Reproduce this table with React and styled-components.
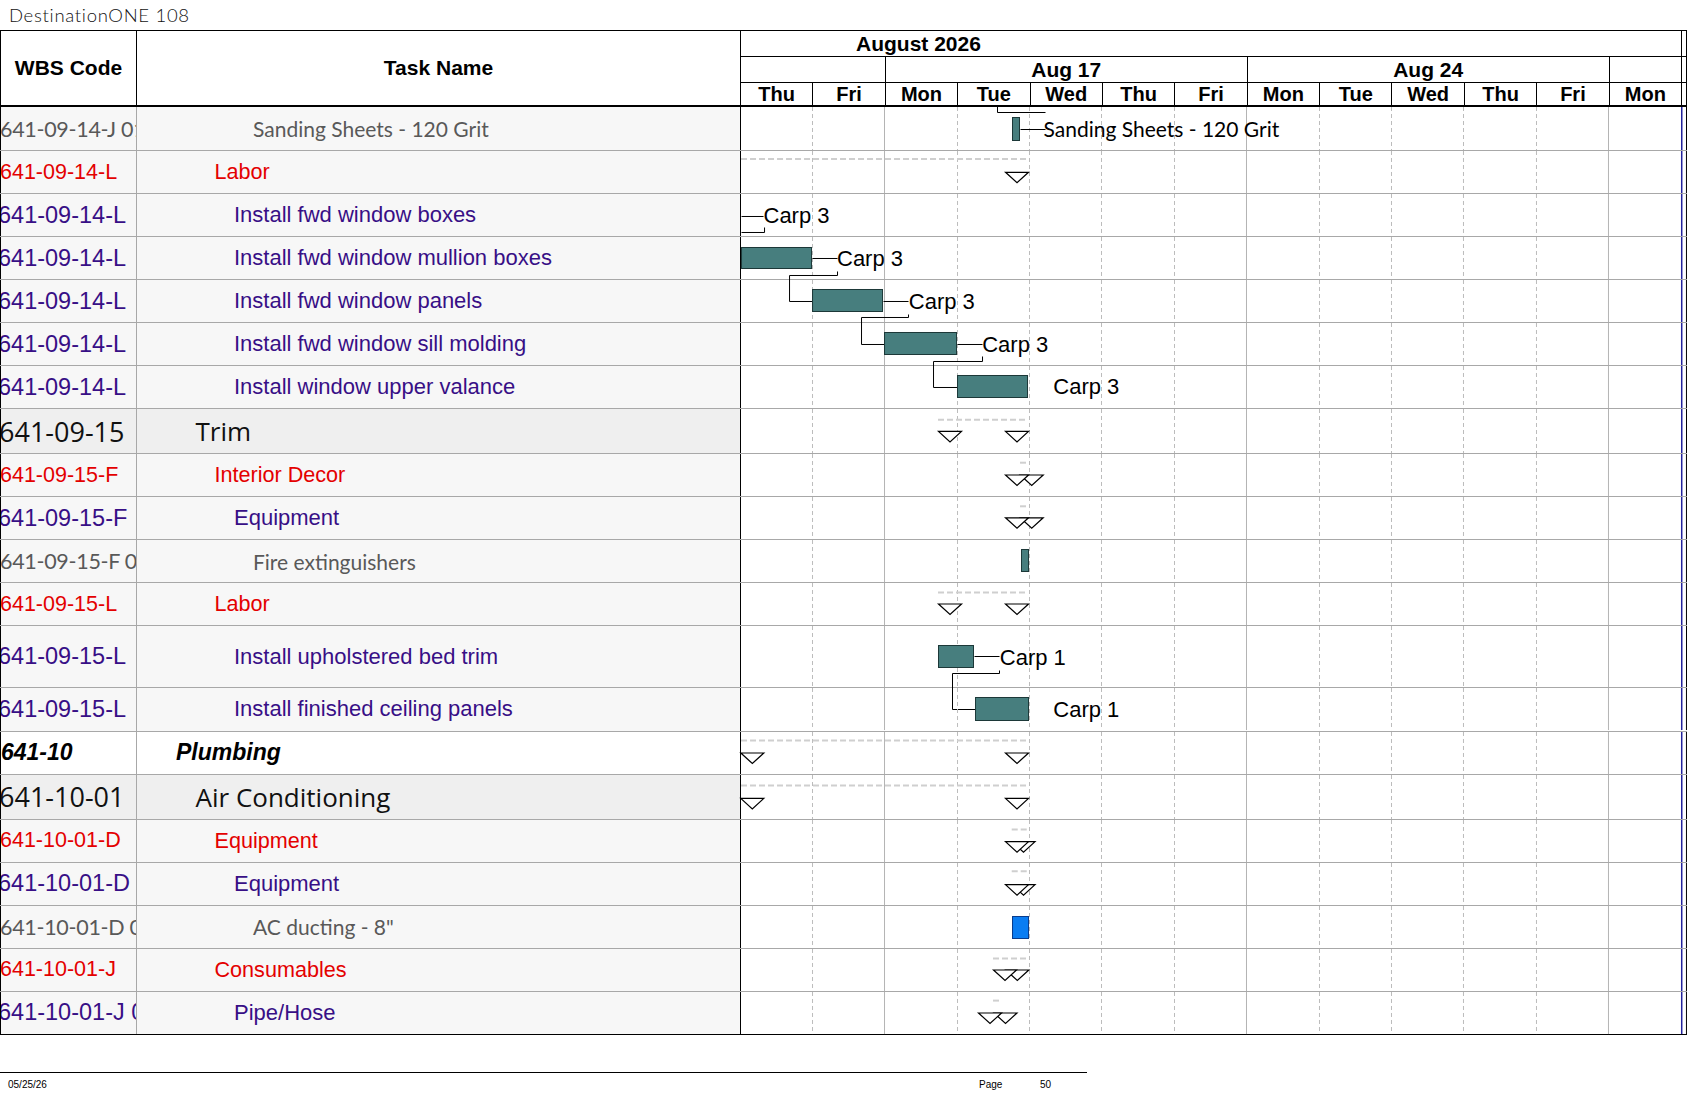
import React from 'react';
import styled, { createGlobalStyle, css } from 'styled-components';

const ARIAL = '"Liberation Sans", Arial, sans-serif';
const CAL = 'Lato, Carlito, "Open Sans", sans-serif';
const SEG = '"Open Sans", "Noto Sans", sans-serif';

const DAY = 941 / 13;
const GX = 741;
const sx = (px) => px - GX;

const GlobalStyle = createGlobalStyle`
  html, body { margin: 0; padding: 0; background: #fff; overflow: hidden; }
  body { font-family: ${ARIAL}; color: #000; }
  * { box-sizing: border-box; }
`;

const VARIANTS = {
  item: { fam: CAL, size: 21, wsize: 21.5, color: '#595959', bg: '#f7f7f7', indent: 116, shift: -1, weight: 400, italic: false, ls: -0.3 },
  group: { fam: ARIAL, size: 21.6, wsize: 21.5, color: '#e40000', bg: '#f7f7f7', indent: 77.5, shift: -1, weight: 400, italic: false, ls: 0 },
  task: { fam: ARIAL, size: 22, wsize: 23.5, color: '#380f86', bg: '#f7f7f7', indent: 97, shift: -3, weight: 400, italic: false, ls: 0 },
  section: { fam: SEG, size: 26, wsize: 27, color: '#111', bg: '#efefef', indent: 58.5, shift: -2, weight: 400, italic: false, ls: 0 },
  phase: { fam: ARIAL, size: 23, wsize: 23, color: '#000', bg: '#fff', indent: 39, shift: 0, weight: 700, italic: true, ls: 0 },
};

const Page = styled.div`
  width: 1687px;
`;

const TitleBar = styled.div`
  height: 30px;
  display: flex;
  align-items: center;
  padding-left: 9px;
  font-family: ${CAL};
  font-size: 18.5px;
  font-weight: 300;
  letter-spacing: 0.7px;
  color: #111;
`;

const Header = styled.div`
  display: grid;
  grid-template-columns: 137px 604px 946px;
  height: 77px;
  border-top: 1px solid #000;
`;

const HeadCell = styled.div`
  display: flex;
  align-items: center;
  justify-content: center;
  font: bold 21px ${ARIAL};
  border-right: 1px solid #000;
  border-bottom: 2px solid #000;
  ${(p) => p.$first && css`border-left: 1px solid #000;`}
`;

const TimeScale = styled.div`
  display: flex;
  flex-direction: column;
`;

const ScaleRow = styled.div`
  display: flex;
  height: ${(p) => p.$h}px;
  border-bottom: ${(p) => p.$bb}px solid #000;
`;

const MonthArea = styled.div`
  width: 941px;
  border-right: 1px solid #000;
  display: flex;
  align-items: center;
  padding-left: 115px;
  font: bold 21px ${ARIAL};
`;

const ScaleArea = styled.div`
  width: 941px;
  display: grid;
  grid-template-columns: ${(p) => p.$cols};
`;

const ScaleCell = styled.div`
  display: flex;
  align-items: center;
  justify-content: center;
  border-right: 1px solid #000;
  font: bold ${(p) => p.$fs || 20}px ${ARIAL};
  overflow: hidden;
  white-space: nowrap;
`;

const Strip = styled.div`
  width: 5px;
  border-right: 1px solid #000;
`;

const Body = styled.div`
  display: flex;
  flex-direction: column;
`;

const Row = styled.div`
  display: grid;
  grid-template-columns: 137px 604px 946px;
  height: ${(p) => p.$h}px;
  flex: none;
  border-bottom: 1px solid ${(p) => (p.$last ? '#000' : '#a8a8a8')};
`;

const WbsCell = styled.div`
  border-left: 1px solid #000;
  border-right: 1px solid #a8a8a8;
  background: ${(p) => VARIANTS[p.$v].bg};
  display: flex;
  align-items: center;
  overflow: hidden;
  white-space: nowrap;
  font-family: ${(p) => VARIANTS[p.$v].fam};
  font-size: ${(p) => VARIANTS[p.$v].wsize}px;
  font-weight: ${(p) => VARIANTS[p.$v].weight};
  font-style: ${(p) => (VARIANTS[p.$v].italic ? 'italic' : 'normal')};
  color: ${(p) => VARIANTS[p.$v].color};
  letter-spacing: ${(p) => VARIANTS[p.$v].ls}px;
`;

const WbsText = styled.span`
  margin-left: ${(p) => VARIANTS[p.$v].shift}px;
`;

const TaskCell = styled.div`
  border-right: 1px solid #000;
  background: ${(p) => VARIANTS[p.$v].bg};
  display: flex;
  align-items: center;
  overflow: hidden;
  white-space: nowrap;
  padding-left: ${(p) => VARIANTS[p.$v].indent}px;
  font-family: ${(p) => VARIANTS[p.$v].fam};
  font-size: ${(p) => VARIANTS[p.$v].size}px;
  font-weight: ${(p) => VARIANTS[p.$v].weight};
  font-style: ${(p) => (VARIANTS[p.$v].italic ? 'italic' : 'normal')};
  color: ${(p) => VARIANTS[p.$v].color};
`;

const GanttCell = styled.div`
  position: relative;
`;

const ChartSvg = styled.svg`
  display: block;
  overflow: visible;
`;

const Footer = styled.div`
  margin-top: 37px;
  width: 1087px;
  height: 24px;
  border-top: 1px solid #000;
  display: grid;
  grid-template-columns: 979px 61px 1fr;
  align-items: center;
  font: 10px ${ARIAL};
`;

const FooterDate = styled.span`
  padding-left: 8px;
`;

/* ---------- chart item helpers (page x, row-relative y) ---------- */
const bar = (x1, x2, y1, y2, color = 'teal') => ({ t: 'bar', x1, x2, y1, y2, color });
const poly = (pts) => ({ t: 'poly', pts });
const tri = (apex, top) => ({ t: 'tri', apex, top });
const dash = (x1, x2, y) => ({ t: 'dash', x1, x2, y });
const label = (x, y, text, font = 'arial') => ({ t: 'label', x, y, text, font });

const N = 43.05;

const rows = [
  {
    wbs: '641-09-14-J 0101', name: 'Sanding Sheets - 120 Grit', v: 'item', h: 44,
    chart: [
      poly([[996.7, -1], [996.7, 5.3], [1045.3, 5.3]]),
      bar(1011.7, 1020, 9.7, 33.7),
      poly([[1020, 22], [1045, 22]]),
      label(1043.5, 29.5, 'Sanding Sheets - 120 Grit', 'cal'),
    ],
  },
  { wbs: '641-09-14-L', name: 'Labor', v: 'group', h: N, chart: [dash(741, 1028.5, 8), tri(1017, 21.3)] },
  {
    wbs: '641-09-14-L', name: 'Install fwd window boxes', v: 'task', h: N,
    chart: [
      poly([[741, 21.7], [763, 21.7]]),
      label(763.5, 29.5, 'Carp 3'),
      poly([[764, 32.7], [764, 37.7], [741, 37.7]]),
    ],
  },
  {
    wbs: '641-09-14-L', name: 'Install fwd window mullion boxes', v: 'task', h: N,
    chart: [
      bar(741, 811.7, 9.7, 32.3),
      poly([[811.7, 20.7], [836.7, 20.7]]),
      label(837, 28.6, 'Carp 3'),
      poly([[836.7, 34], [836.7, 38.3], [789, 38.3], [789, 64], [812.3, 64]]),
    ],
  },
  {
    wbs: '641-09-14-L', name: 'Install fwd window panels', v: 'task', h: N,
    chart: [
      bar(812.3, 883.3, 9.4, 31.7),
      poly([[883.3, 20.7], [908.3, 20.7]]),
      label(908.8, 28.6, 'Carp 3'),
      poly([[908.3, 33.7], [908.3, 37.4], [860.7, 37.4], [860.7, 64], [884.3, 64]]),
    ],
  },
  {
    wbs: '641-09-14-L', name: 'Install fwd window sill molding', v: 'task', h: N,
    chart: [
      bar(884.3, 956.7, 9, 31.7),
      poly([[956.7, 21], [981.7, 21]]),
      label(982.2, 28.9, 'Carp 3'),
      poly([[981.7, 33], [981.7, 37.7], [932.7, 37.7], [932.7, 63.7], [957.3, 63.7]]),
    ],
  },
  {
    wbs: '641-09-14-L', name: 'Install window upper valance', v: 'task', h: N,
    chart: [bar(957.3, 1028.3, 9, 31.7), label(1053.3, 28.3, 'Carp 3')],
  },
  { wbs: '641-09-15', name: 'Trim', v: 'section', h: 45, chart: [dash(938, 1028, 10.7), tri(1017, 22.4), tri(950, 22.4)] },
  { wbs: '641-09-15-F', name: 'Interior Decor', v: 'group', h: N, chart: [dash(1020, 1028, 8.7), tri(1031.7, 21), tri(1017, 21)] },
  { wbs: '641-09-15-F', name: 'Equipment', v: 'task', h: N, chart: [dash(1020, 1028, 9.3), tri(1031.7, 20.8), tri(1017, 20.8)] },
  { wbs: '641-09-15-F 0101', name: 'Fire extinguishers', v: 'item', h: N, chart: [bar(1020.7, 1028.7, 9, 32.4)] },
  { wbs: '641-09-15-L', name: 'Labor', v: 'group', h: N, chart: [dash(938, 1028, 9.4), tri(1017, 21), tri(950, 21)] },
  {
    wbs: '641-09-15-L', name: 'Install upholstered bed trim', v: 'task', h: 62,
    chart: [
      bar(938.3, 974.3, 18.6, 41.6),
      poly([[974.3, 30.3], [999.3, 30.3]]),
      label(999.8, 39, 'Carp 1'),
      poly([[999.3, 43.6], [999.3, 47], [951.7, 47], [951.7, 82.6], [975.3, 82.6]]),
    ],
  },
  {
    wbs: '641-09-15-L', name: 'Install finished ceiling panels', v: 'task', h: N,
    chart: [bar(975.3, 1028.7, 8.6, 32.6), label(1053.3, 29, 'Carp 1')],
  },
  { wbs: '641-10', name: 'Plumbing', v: 'phase', h: N, chart: [dash(741, 1028.7, 8.6), tri(752.3, 21), tri(1017, 21)] },
  { wbs: '641-10-01', name: 'Air Conditioning', v: 'section', h: 45, chart: [dash(741, 1028.7, 10.4), tri(752.3, 23.4), tri(1017, 23.4)] },
  { wbs: '641-10-01-D', name: 'Equipment', v: 'group', h: N, chart: [dash(1011.7, 1028.7, 9.4), tri(1023.5, 21.7), tri(1017, 21.7)] },
  { wbs: '641-10-01-D', name: 'Equipment', v: 'task', h: N, chart: [dash(1011.7, 1028.7, 8.3), tri(1023.5, 21.6), tri(1017, 21.6)] },
  { wbs: '641-10-01-D 0101', name: 'AC ducting - 8"', v: 'item', h: N, chart: [bar(1011.7, 1028.7, 10, 33, 'blue')] },
  { wbs: '641-10-01-J', name: 'Consumables', v: 'group', h: N, chart: [dash(993, 1028.7, 9.4), tri(1017.3, 21), tri(1005, 21)] },
  { wbs: '641-10-01-J 0101', name: 'Pipe/Hose', v: 'task', h: N, chart: [dash(993, 1000, 8.6), tri(1005.5, 21), tri(990, 21)] },
];

const BAR_COLORS = {
  teal: { fill: '#477e7e', stroke: '#1c3838' },
  blue: { fill: '#0b7df2', stroke: '#0a3c8c' },
};

const px = (v) => Math.round(v) + 0.5;

function ChartItem({ it }) {
  switch (it.t) {
    case 'bar': {
      const X1 = Math.round(sx(it.x1));
      const X2 = Math.round(sx(it.x2));
      const Y1 = Math.round(it.y1);
      const Y2 = Math.round(it.y2);
      const c = BAR_COLORS[it.color];
      return <rect x={X1 + 0.5} y={Y1 + 0.5} width={X2 - X1 - 1} height={Y2 - Y1 - 1} fill={c.fill} stroke={c.stroke} strokeWidth={1} />;
    }
    case 'poly':
      return (
        <polyline
          points={it.pts.map(([x, y]) => `${px(sx(x))},${px(y)}`).join(' ')}
          fill="none"
          stroke="#000"
          strokeWidth={1}
        />
      );
    case 'tri': {
      const a = sx(it.apex);
      const t = it.top;
      return (
        <polygon
          points={`${a - 11.5},${t} ${a + 11.5},${t} ${a},${t + 10.5}`}
          fill="#fff"
          stroke="#000"
          strokeWidth={1.2}
        />
      );
    }
    case 'dash':
      return <line x1={sx(it.x1)} x2={sx(it.x2)} y1={it.y} y2={it.y} stroke="#cfcfcf" strokeWidth={2} strokeDasharray="6 3" />;
    case 'label':
      return (
        <text
          x={sx(it.x)}
          y={it.y}
          fontFamily={it.font === 'cal' ? CAL : ARIAL}
          fontSize={it.font === 'cal' ? 21 : 22}
          fill="#000"
        >
          {it.text}
        </text>
      );
    default:
      return null;
  }
}

function RowChart({ h, items }) {
  const H = h - 1;
  const lines = [];
  for (let k = 1; k <= 12; k++) {
    const x = Math.floor(k * DAY) - 0.5;
    const solid = k === 2 || k === 7 || k === 12;
    lines.push(
      <line
        key={k}
        x1={x}
        x2={x}
        y1={0}
        y2={H}
        stroke={solid ? '#b4b4b4' : '#bcbcbc'}
        strokeWidth={1}
        strokeDasharray={solid ? undefined : '4 3'}
      />
    );
  }
  return (
    <ChartSvg width={946} height={H} viewBox={`0 0 946 ${H}`}>
      {lines}
      <line x1={940.75} x2={940.75} y1={0} y2={H} stroke="#22229c" strokeWidth={1.5} />
      <line x1={945.5} x2={945.5} y1={0} y2={H} stroke="#000" strokeWidth={1} />
      {items.map((it, i) => (
        <ChartItem key={i} it={it} />
      ))}
    </ChartSvg>
  );
}

const DAYS = ['Thu', 'Fri', 'Mon', 'Tue', 'Wed', 'Thu', 'Fri', 'Mon', 'Tue', 'Wed', 'Thu', 'Fri', 'Mon'];

export default function App() {
  return (
    <Page>
      <GlobalStyle />
      <TitleBar>DestinationONE 108</TitleBar>
      <Header>
        <HeadCell $first>WBS Code</HeadCell>
        <HeadCell>Task Name</HeadCell>
        <TimeScale>
          <ScaleRow $h={26} $bb={1}>
            <MonthArea>August 2026</MonthArea>
            <Strip />
          </ScaleRow>
          <ScaleRow $h={26} $bb={1}>
            <ScaleArea $cols={`${2 * DAY}px ${5 * DAY}px ${5 * DAY}px ${DAY}px`}>
              <ScaleCell />
              <ScaleCell $fs={21}>Aug 17</ScaleCell>
              <ScaleCell $fs={21}>Aug 24</ScaleCell>
              <ScaleCell />
            </ScaleArea>
            <Strip />
          </ScaleRow>
          <ScaleRow $h={24} $bb={2}>
            <ScaleArea $cols="repeat(13, 1fr)">
              {DAYS.map((d, i) => (
                <ScaleCell key={i} $fs={20}>
                  {d}
                </ScaleCell>
              ))}
            </ScaleArea>
            <Strip />
          </ScaleRow>
        </TimeScale>
      </Header>
      <Body>
        {rows.map((r, i) => (
          <Row key={i} $h={r.h} $last={i === rows.length - 1}>
            <WbsCell $v={r.v}>
              <WbsText $v={r.v}>{r.wbs}</WbsText>
            </WbsCell>
            <TaskCell $v={r.v}>{r.name}</TaskCell>
            <GanttCell>
              <RowChart h={r.h} items={r.chart} />
            </GanttCell>
          </Row>
        ))}
      </Body>
      <Footer>
        <FooterDate>05/25/26</FooterDate>
        <span>Page</span>
        <span>50</span>
      </Footer>
    </Page>
  );
}
